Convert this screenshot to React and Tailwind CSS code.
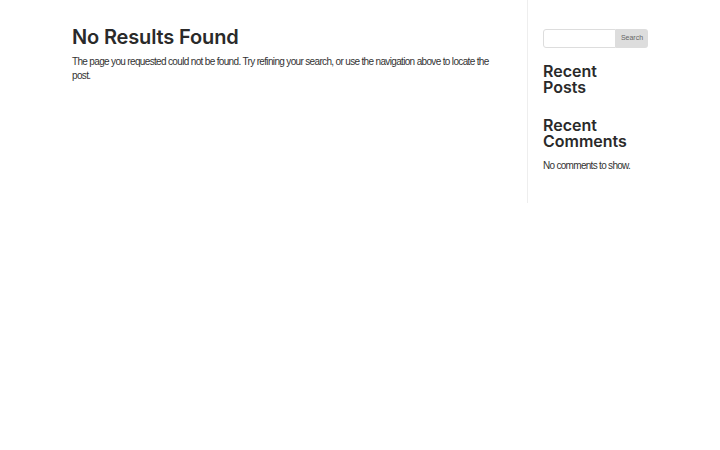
export default function App() {
  const body = { fontFamily: '"Liberation Sans", Arial, sans-serif' };
  const head = { fontFamily: 'Inter, "Liberation Sans", sans-serif' };
  return (
    <div className="w-[720px] h-[450px] bg-white text-[#333]" style={body}>
      <div className="mx-auto w-[576px] flex">
        {/* main column */}
        <div className="w-[455px] pt-[27px] pr-[30px]">
          <h1 className="text-[20px] leading-[20px] font-semibold text-[#2a2a2a] tracking-[-0.15px]" style={head}>
            No Results Found
          </h1>
          <p className="mt-[8px] text-[10px] leading-[14px] tracking-[-0.66px]">
            The page you requested could not be found. Try refining your search, or use the navigation above to locate the post.
          </p>
        </div>
        {/* sidebar */}
        <aside className="flex-1 border-l border-[#eee] pl-[15px] pt-[29px] pb-[30px]">
          <form className="flex h-[19px]">
            <input className="w-[73px] h-[19px] border border-[#ddd] rounded-l-[3px] outline-none" />
            <button
              type="button"
              className="w-[32px] h-[19px] bg-[#ddd] text-[7px] text-[#666] rounded-r-[3px]"
            >
              Search
            </button>
          </form>
          <h4 className="mt-[15px] text-[16px] leading-[16px] font-semibold text-[#2a2a2a]" style={head}>
            Recent<br />Posts
          </h4>
          <h4 className="mt-[22px] text-[16px] leading-[16px] font-semibold text-[#2a2a2a]" style={head}>
            Recent<br />Comments
          </h4>
          <p className="mt-[10px] text-[10px] leading-[14px] tracking-[-0.7px]">No comments to show.</p>
        </aside>
      </div>
    </div>
  );
}
